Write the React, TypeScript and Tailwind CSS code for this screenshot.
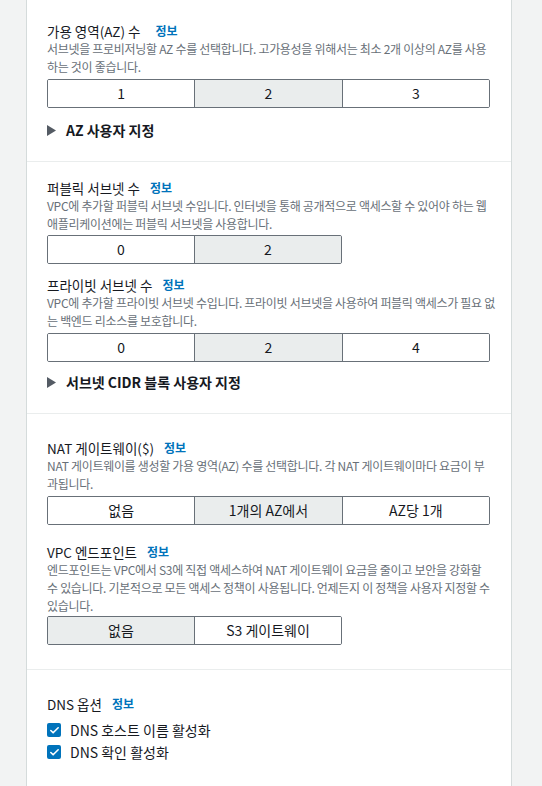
import { Check } from 'lucide-react'

const font = { fontFamily: '"Noto Sans CJK KR", "Noto Sans", sans-serif' }

type Option = { label: string; selected?: boolean }

function FieldTitle({ children, gap = 'ml-[10px]' }: { children: React.ReactNode; gap?: string }) {
  return (
    <div className="flex items-center text-[13.5px] leading-[18px] text-[#16191f]">
      <span>{children}</span>
      <span className={`${gap} text-[12px] font-bold text-[#0073bb]`}>정보</span>
    </div>
  )
}

// lines are broken where the console breaks them
function Description({ lines }: { lines: string[] }) {
  return (
    <div className="text-[12px] leading-[18px] tracking-[-0.3px] text-[#687078]">
      {lines.map((line) => (
        <p key={line} className="whitespace-nowrap">
          {line}
        </p>
      ))}
    </div>
  )
}

function Segmented({ options, width }: { options: Option[]; width: string }) {
  return (
    <div
      className={`flex h-[29px] overflow-hidden rounded-[2px] border border-[#687078] ${width}`}
    >
      {options.map((option, index) => (
        <div
          key={option.label}
          className={
            'flex flex-1 items-center justify-center text-[14px] text-[#16191f] ' +
            (index > 0 ? 'border-l border-[#687078] ' : '') +
            (option.selected ? 'bg-[#eaeded]' : 'bg-white')
          }
        >
          {option.label}
        </div>
      ))}
    </div>
  )
}

function Expander({ children }: { children: React.ReactNode }) {
  return (
    <div className="flex h-[20px] items-center gap-[10px] text-[14px] font-bold text-[#16191f]">
      <svg width="9" height="11" viewBox="0 0 9 11" aria-hidden="true">
        <polygon points="0,0 9,5.5 0,11" fill="#545b64" />
      </svg>
      {children}
    </div>
  )
}

function CheckRow({ children }: { children: React.ReactNode }) {
  return (
    <div className="flex h-[22px] items-center gap-[9px] text-[14px] text-[#16191f]">
      <span className="flex size-[14px] items-center justify-center rounded-[2px] bg-[#0073bb]">
        <Check className="size-[11px] text-white" strokeWidth={3.5} aria-hidden="true" />
      </span>
      {children}
    </div>
  )
}

function App() {
  return (
    <div className="h-[786px] w-[542px] overflow-hidden bg-[#f2f3f3]" style={font}>
      <div className="ml-[26px] h-full w-[486px] border-x border-[#d5dbdb] bg-white">
        {/* availability zones */}
        <section className="border-b border-[#eaeded] px-[20px] pt-[22px] pb-[21px]">
          <FieldTitle gap="ml-[15px]">가용 영역(AZ) 수</FieldTitle>
          <Description
            lines={[
              '서브넷을 프로비저닝할 AZ 수를 선택합니다. 고가용성을 위해서는 최소 2개 이상의 AZ를 사용',
              '하는 것이 좋습니다.',
            ]}
          />
          <div className="mt-[3px]">
            <Segmented
              width="w-[443px]"
              options={[{ label: '1' }, { label: '2', selected: true }, { label: '3' }]}
            />
          </div>
          <div className="mt-[12px]">
            <Expander>AZ 사용자 지정</Expander>
          </div>
        </section>

        {/* subnets */}
        <section className="border-b border-[#eaeded] px-[20px] pt-[17px] pb-[21px]">
          <FieldTitle>퍼블릭 서브넷 수</FieldTitle>
          <Description
            lines={[
              'VPC에 추가할 퍼블릭 서브넷 수입니다. 인터넷을 통해 공개적으로 액세스할 수 있어야 하는 웹',
              '애플리케이션에는 퍼블릭 서브넷을 사용합니다.',
            ]}
          />
          <div className="mt-[2px]">
            <Segmented width="w-[295px]" options={[{ label: '0' }, { label: '2', selected: true }]} />
          </div>
          <div className="mt-[12px]">
            <FieldTitle>프라이빗 서브넷 수</FieldTitle>
          </div>
          <Description
            lines={[
              'VPC에 추가할 프라이빗 서브넷 수입니다. 프라이빗 서브넷을 사용하여 퍼블릭 액세스가 필요 없',
              '는 백엔드 리소스를 보호합니다.',
            ]}
          />
          <div className="mt-[3px]">
            <Segmented
              width="w-[443px]"
              options={[{ label: '0' }, { label: '2', selected: true }, { label: '4' }]}
            />
          </div>
          <div className="mt-[10px]">
            <Expander>서브넷 CIDR 블록 사용자 지정</Expander>
          </div>
        </section>

        {/* gateways and endpoints */}
        <section className="border-b border-[#eaeded] px-[20px] pt-[25px] pb-[24px]">
          <FieldTitle>NAT 게이트웨이($)</FieldTitle>
          <Description
            lines={[
              'NAT 게이트웨이를 생성할 가용 영역(AZ) 수를 선택합니다. 각 NAT 게이트웨이마다 요금이 부',
              '과됩니다.',
            ]}
          />
          <div className="mt-[3px]">
            <Segmented
              width="w-[443px]"
              options={[{ label: '없음' }, { label: '1개의 AZ에서', selected: true }, { label: 'AZ당 1개' }]}
            />
          </div>
          <div className="mt-[18px]">
            <FieldTitle>VPC 엔드포인트</FieldTitle>
          </div>
          <Description
            lines={[
              '엔드포인트는 VPC에서 S3에 직접 액세스하여 NAT 게이트웨이 요금을 줄이고 보안을 강화할',
              '수 있습니다. 기본적으로 모든 액세스 정책이 사용됩니다. 언제든지 이 정책을 사용자 지정할 수',
              '있습니다.',
            ]}
          />
          <div className="mt-[1px]">
            <Segmented
              width="w-[295px]"
              options={[{ label: '없음', selected: true }, { label: 'S3 게이트웨이' }]}
            />
          </div>
        </section>

        {/* dns */}
        <section className="px-[20px] pt-[25px]">
          <FieldTitle>DNS 옵션</FieldTitle>
          <div className="mt-[6px]">
            <CheckRow>DNS 호스트 이름 활성화</CheckRow>
            <CheckRow>DNS 확인 활성화</CheckRow>
          </div>
        </section>
      </div>
    </div>
  )
}

export default App
